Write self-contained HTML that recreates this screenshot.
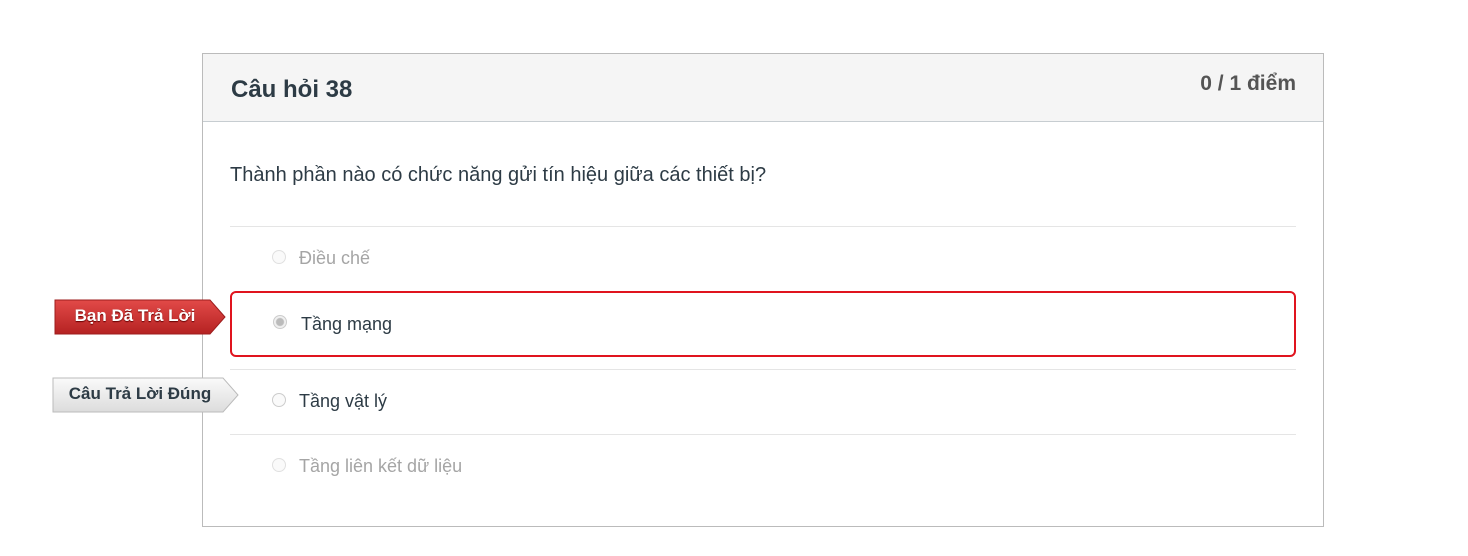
<!DOCTYPE html>
<html><head><meta charset="utf-8"><style>
body{margin:0;width:1468px;height:556px;background:#fff;font-family:"Liberation Sans",sans-serif;position:relative;overflow:hidden}
.box{position:absolute;left:202px;top:53px;width:1120px;height:472px;border:1px solid #bbb}
.hdr{height:67px;background:#f5f5f5;border-bottom:1px solid #c7cdd1;position:relative}
.t{position:absolute;left:28px;top:22px;font-size:24px;font-weight:bold;color:#2d3b45}
.s{position:absolute;right:27px;top:18px;font-size:21px;font-weight:bold;color:#555}
.a{position:absolute;font-size:18px;color:#2d3b45}
.q{position:absolute;left:230px;top:164px;font-size:20px;color:#2d3b45}
.ln{position:absolute;left:230px;width:1066px;height:1px;background:#e5e5e5}
.r{position:absolute;width:12px;height:12px;border:1px solid #ccc;border-radius:50%;background:#fafafa}
.tag{position:absolute;font-weight:bold;font-size:17px;line-height:36px;text-align:center}
</style></head><body>
<div class="box"><div class="hdr"><div class="t">Câu hỏi 38</div><div class="s">0 / 1 điểm</div></div></div>
<div class="q">Thành phần nào có chức năng gửi tín hiệu giữa các thiết bị?</div>
<div class="ln" style="top:226px"></div>
<div class="r" style="left:272px;top:250px;border-color:#e0e0e0"></div>
<div class="a" style="left:299px;top:248px;color:#a5a5a5">Điều chế</div>
<div style="position:absolute;left:230px;top:291px;width:1062px;height:62px;border:2px solid #e0141e;border-radius:6px"></div>
<div class="r" style="left:273px;top:315px;background:radial-gradient(circle,#bbb 0 3.5px,#f0f0f0 4.5px)"></div>
<div class="a" style="left:301px;top:314px">Tầng mạng</div>
<div class="ln" style="top:369px"></div>
<div class="r" style="left:272px;top:393px"></div>
<div class="a" style="left:299px;top:391px">Tầng vật lý</div>
<div class="ln" style="top:434px"></div>
<div class="r" style="left:272px;top:458px;border-color:#e0e0e0"></div>
<div class="a" style="left:299px;top:456px;color:#a5a5a5">Tầng liên kết dữ liệu</div>
<svg style="position:absolute;left:54px;top:298px" width="174" height="40"><defs><linearGradient id="g1" x1="0" y1="0" x2="0" y2="1"><stop offset="0" stop-color="#e24a48"/><stop offset="1" stop-color="#b52222"/></linearGradient><linearGradient id="g2" x1="0" y1="0" x2="0" y2="1"><stop offset="0" stop-color="#fafafa"/><stop offset="1" stop-color="#dcdcdc"/></linearGradient></defs><path d="M1 2h155l15 17-15 17H1z" fill="url(#g1)" stroke="#9d1d1d"/></svg>
<div class="tag" style="left:56px;top:298px;width:158px;color:#fff;text-shadow:0 1px 1px #600">Bạn Đã Trả Lời</div>
<svg style="position:absolute;left:52px;top:376px" width="190" height="40"><path d="M1 2h170l15 17-15 17H1z" fill="url(#g2)" stroke="#bbb"/></svg>
<div class="tag" style="left:54px;top:376px;width:172px;color:#2d3b45">Câu Trả Lời Đúng</div>
</body></html>
